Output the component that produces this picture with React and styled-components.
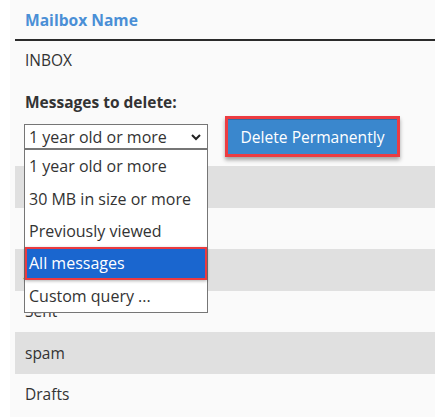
import React from 'react'
import styled, { createGlobalStyle } from 'styled-components'

const GlobalStyle = createGlobalStyle`
  body {
    margin: 0;
    background: #ffffff;
    font-family: "Open Sans", "Liberation Sans", sans-serif;
    color: #333333;
  }
`

const folders = ['', '', 'Junk', 'Sent', 'spam', 'Drafts']
const options = [
  '1 year old or more',
  '30 MB in size or more',
  'Previously viewed',
  'All messages',
  'Custom query ...',
]

function App() {
  return (
    <>
      <GlobalStyle />
      <Panel>
        <Table>
          <HeadRow>
            <HeadCell>Mailbox Name</HeadCell>
          </HeadRow>
          <OpenRow>
            <Cell>INBOX</Cell>
            <Label>Messages to delete:</Label>
            <Controls>
              <SelectWrap>
                <Select>
                  <span>1 year old or more</span>
                  <svg width="12" height="8" viewBox="0 0 12 8">
                    <path d="M2 2l4 4 4-4" fill="none" stroke="#222" strokeWidth="2" />
                  </svg>
                </Select>
                <Options>
                  {options.map((o, i) => (
                    <Option key={o} selected={i === 3}>{o}</Option>
                  ))}
                </Options>
              </SelectWrap>
              <Marked>
                <DeleteButton>Delete Permanently</DeleteButton>
              </Marked>
            </Controls>
          </OpenRow>
          {folders.map((f, i) => (
            <Row key={i} odd={i % 2 === 0}>
              <Cell>{f}</Cell>
            </Row>
          ))}
        </Table>
      </Panel>
    </>
  )
}

export default App

const Panel = styled.div`
  margin-left: 10px;
  height: 417px;
  background: #fafafa;
  padding-left: 5px;
  overflow: hidden;
`
const Table = styled.div`
  display: flex;
  flex-direction: column;
`
const HeadRow = styled.div`
  height: 39px;
  display: flex;
  align-items: center;
  padding-left: 10px;
  border-bottom: 2px solid #2b2b2b;
`
const HeadCell = styled.div`
  font-weight: 700;
  font-size: 15.6px;
  color: #4a8fd6;
`
const OpenRow = styled.div`
  height: 125px;
  padding: 9px 10px 0;
  box-sizing: border-box;
  display: flex;
  flex-direction: column;
`
const Cell = styled.div`
  font-size: 15.5px;
  line-height: 20px;
`
const Label = styled.div`
  font-size: 15.5px;
  font-weight: 700;
  margin-top: 22px;
  line-height: 20px;
`
const Controls = styled.div`
  display: flex;
  align-items: flex-start;
  margin-top: 4px;
`
const SelectWrap = styled.div`
  position: relative;
  margin-left: -1px;
`
const Select = styled.div`
  width: 184px;
  height: 25px;
  box-sizing: border-box;
  border: 1px solid #767676;
  background: #fff;
  display: flex;
  align-items: center;
  justify-content: space-between;
  padding: 0 5px 0 4px;
  font-size: 16px;
  margin-top: 8px;
`
const Options = styled.div`
  position: absolute;
  top: 33px;
  left: 0;
  width: 184px;
  box-sizing: border-box;
  border: 1px solid #767676;
  background: #fff;
  padding: 0;
  z-index: 2;
`
const Option = styled.div`
  height: 32.4px;
  display: flex;
  align-items: center;
  padding-left: ${p => (p.selected ? '2px' : '4px')};
  font-size: 16px;
  box-sizing: border-box;
  ${p => p.selected && `
    background: #1a66cf;
    color: #fff;
    border: 2px solid #ea3a40;
    box-shadow: 0 1px 3px rgba(0, 0, 0, 0.3);
  `}
`
const Marked = styled.div`
  margin-left: 17px;
  border: 3px solid #ec3c42;
  box-shadow: 0 3px 4px rgba(0, 0, 0, 0.35);
`
const DeleteButton = styled.button`
  display: block;
  width: 169px;
  height: 35px;
  background: #3a87cd;
  border: none;
  border-top: 1px solid #2d6ea8;
  color: #fff;
  font-family: "Open Sans", "Liberation Sans", sans-serif;
  font-size: 15.6px;
  padding: 0;
`
const Row = styled.div`
  height: 41.5px;
  display: flex;
  align-items: center;
  padding-left: 10px;
  background: ${p => (p.odd ? '#e0e0e0' : 'transparent')};
`
